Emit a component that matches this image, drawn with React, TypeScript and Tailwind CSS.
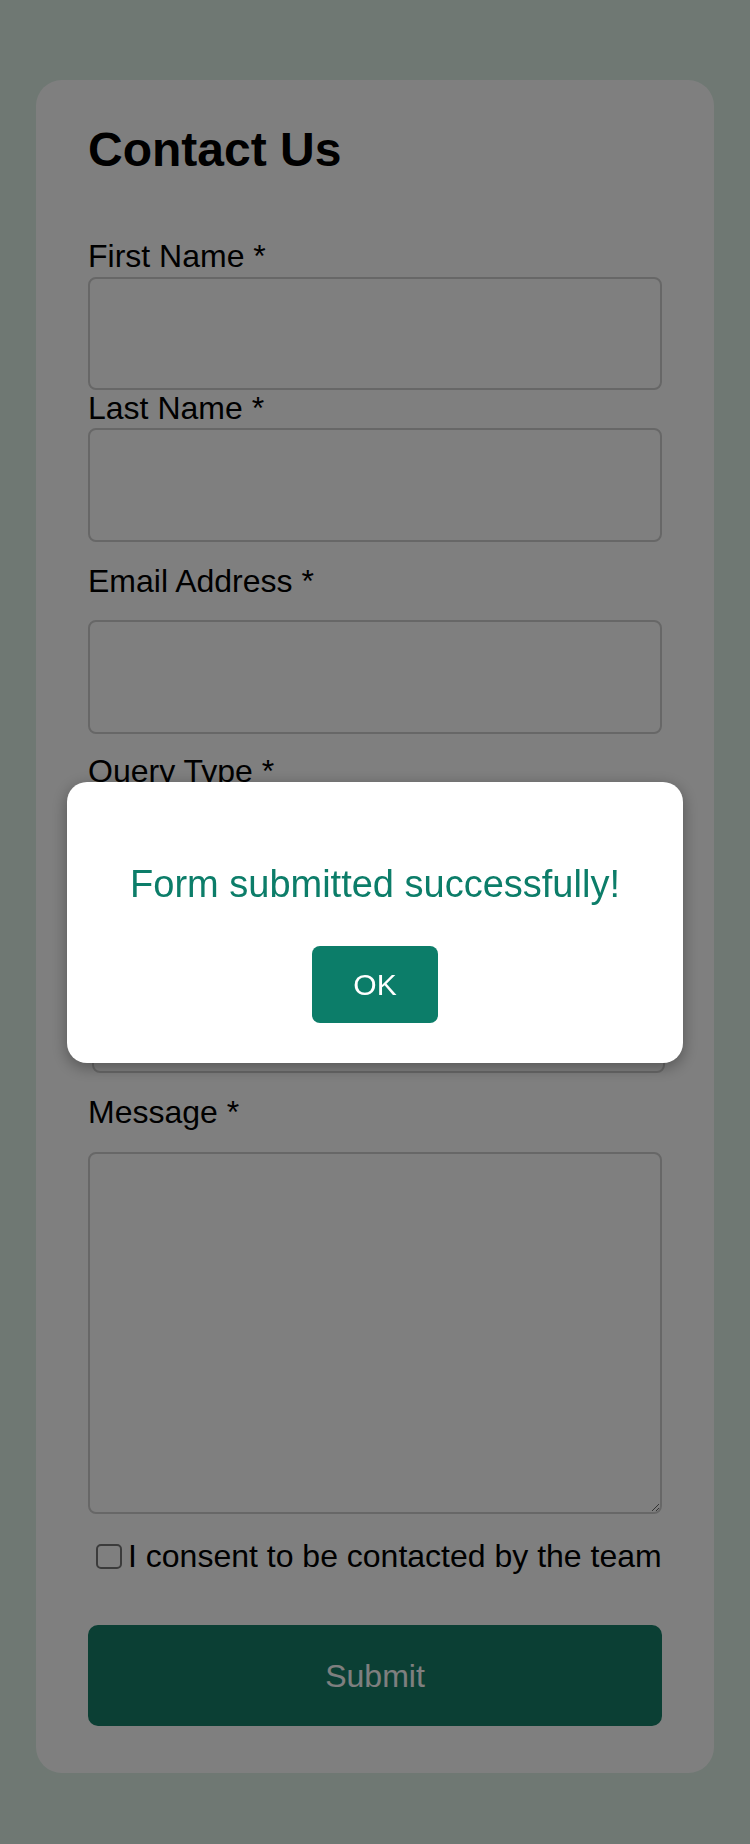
import React from "react";

const font = { fontFamily: '"Liberation Sans", Arial, sans-serif' };

function Label({ children, className = "" }: { children: React.ReactNode; className?: string }) {
  return <label className={`block text-[32px] leading-[36px] text-black ${className}`}>{children}</label>;
}

export default function App() {
  return (
    <div className="min-h-screen bg-[#dff1e7] pt-[80px] pb-[71px]" style={font}>
      <div className="mx-[36px] w-[678px] rounded-[26px] bg-white px-[52px] pt-[46px] pb-[47px]">
        <h1 className="text-[48px] font-bold leading-[48px] text-black">Contact Us</h1>
        <form className="mt-[64px] flex flex-col" onSubmit={(e) => e.preventDefault()}>
          <Label className="mb-[3px]">First Name *</Label>
          <input className="h-[113px] w-full rounded-[8px] border-2 border-[#cecece] bg-white" />
          <Label className="mb-[2px]">Last Name *</Label>
          <input className="h-[114px] w-full rounded-[8px] border-2 border-[#cecece] bg-white" />
          <Label className="mt-[21px] mb-[21px]">Email Address *</Label>
          <input className="h-[114px] w-full rounded-[8px] border-2 border-[#cecece] bg-white" />
          <Label className="mt-[19px] mb-[3px]">Query Type *</Label>
          <div className="flex flex-col gap-[21px]">
            <label className="ml-[4px] -mr-[3px] flex h-[130px] items-center gap-3 rounded-[8px] border-2 border-[#cecece] px-6 text-[32px]">
              <input type="radio" name="q" className="h-6 w-6" />
              General Enquiry
            </label>
            <label className="ml-[4px] -mr-[3px] flex h-[130px] items-center gap-3 rounded-[8px] border-2 border-[#cecece] px-6 text-[32px]">
              <input type="radio" name="q" className="h-6 w-6" />
              Support Request
            </label>
          </div>
          <Label className="mt-[21px] mb-[22px]">Message *</Label>
          <textarea className="h-[362px] w-full rounded-[8px] border-2 border-[#cecece] bg-white" />
          <div className="mt-[24px] flex h-[36px] items-center">
            <span className="ml-[8px] inline-block h-[25px] w-[26px] rounded-[5px] border-2 border-[#767676] bg-white" />
            <span className="ml-[6px] text-[32px] leading-[36px] text-black">I consent to be contacted by the team</span>
          </div>
          <button
            type="submit"
            className="mt-[51px] h-[101px] w-full rounded-[10px] bg-[#167e68] text-[32px] text-white"
          >
            Submit
          </button>
        </form>
      </div>

      <div className="fixed inset-0 flex items-center justify-center bg-black/50">
        <div className="w-[616px] rounded-[20px] bg-white p-[40px] text-center shadow-[0_4px_16px_rgba(0,0,0,0.35)]">
          <p className="my-[40px] text-[38px] leading-[44px] text-[#0c7d69]">Form submitted successfully!</p>
          <button className="h-[77px] w-[126px] rounded-[8px] bg-[#0c7d69] text-[30px] text-white">OK</button>
        </div>
      </div>
    </div>
  );
}
